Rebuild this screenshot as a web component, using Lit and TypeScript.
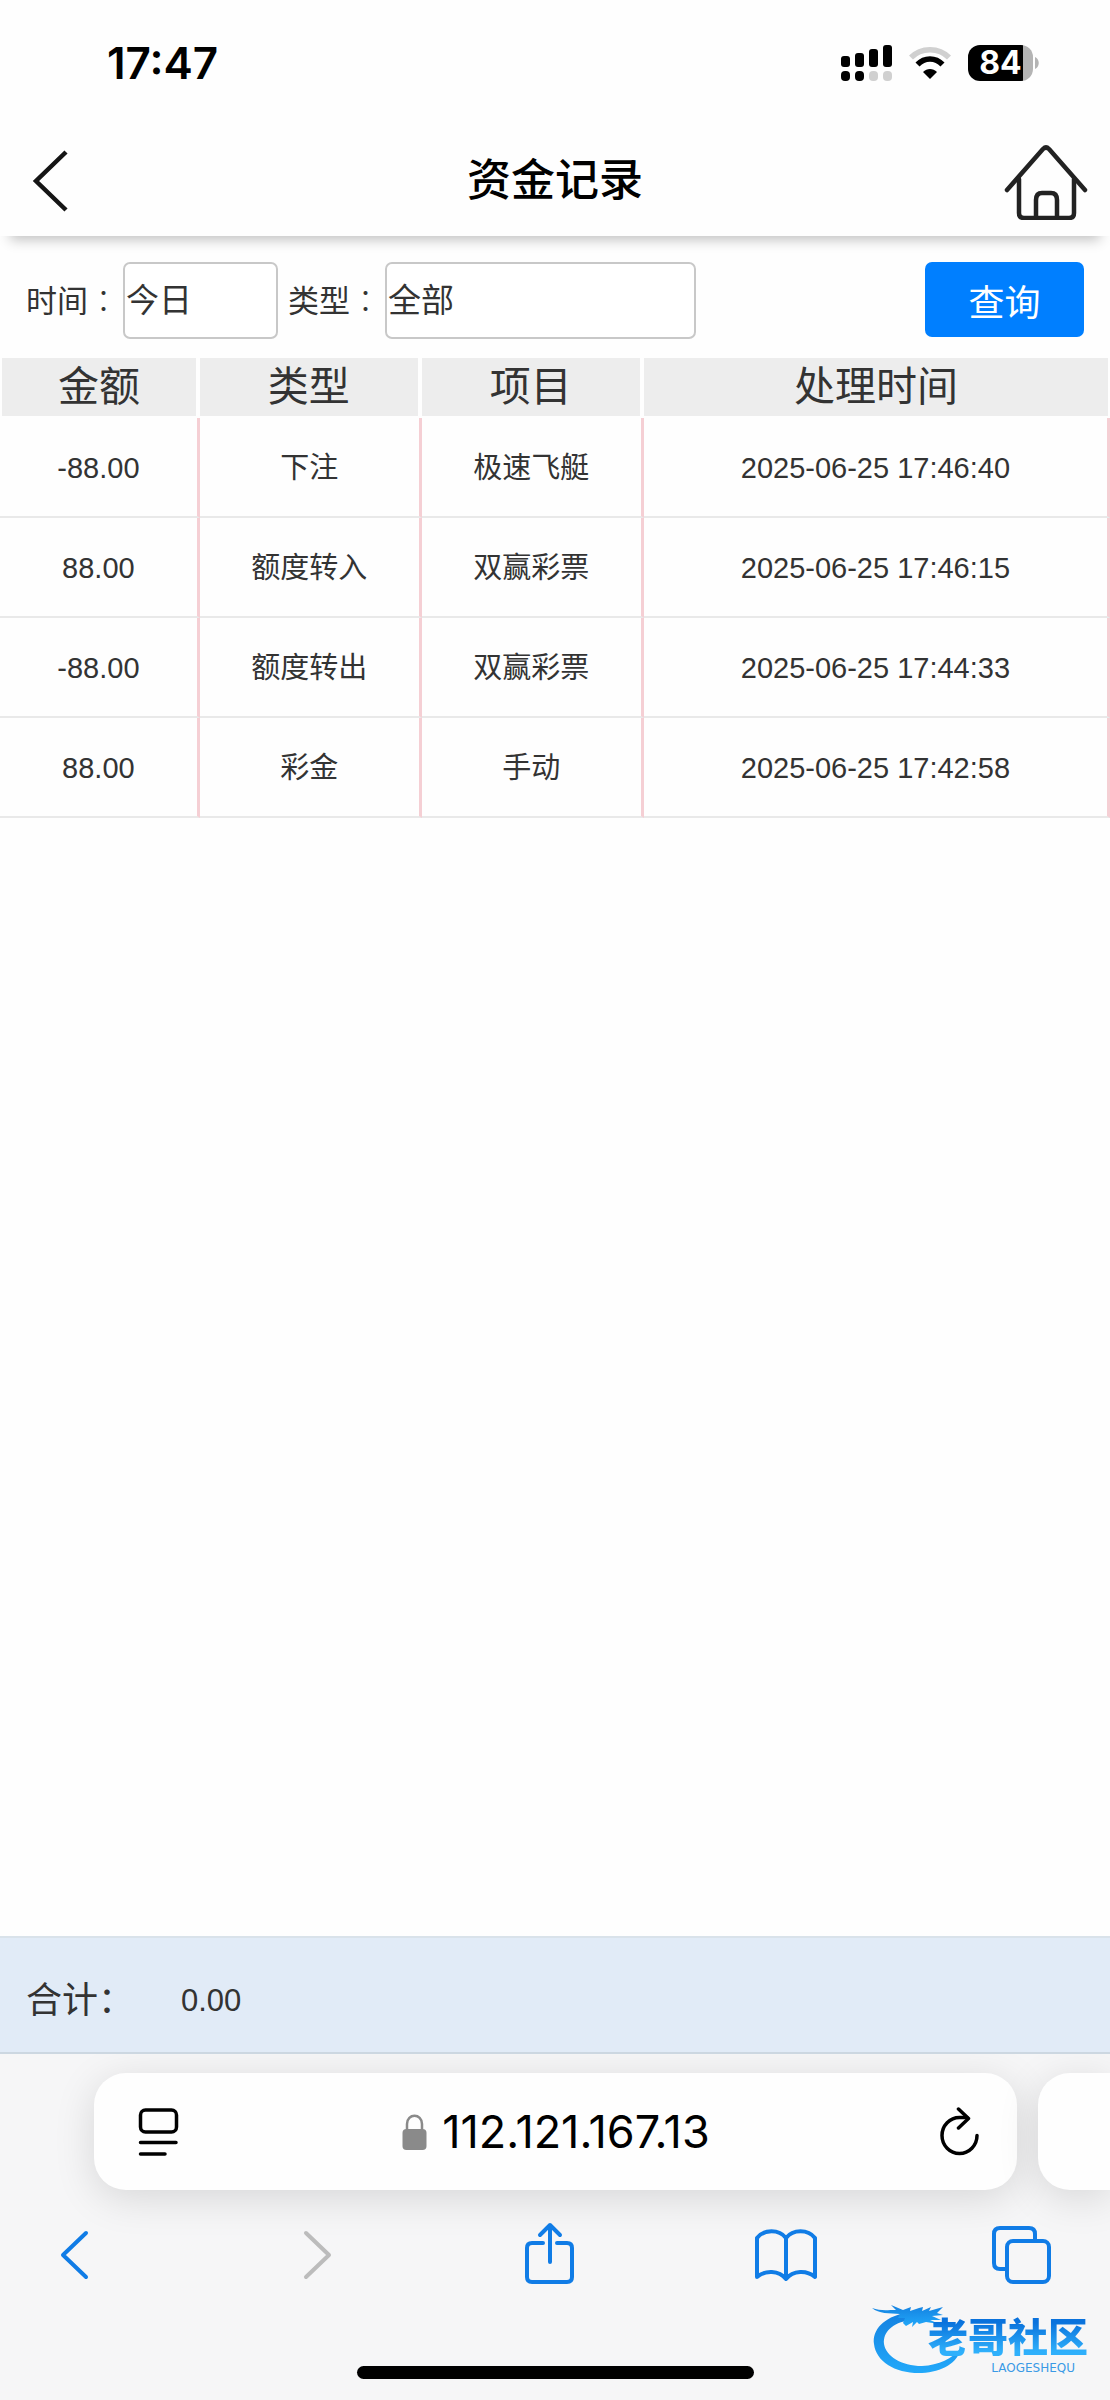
import { LitElement, html, css, svg } from "lit";
import { customElement, property } from "lit/decorators.js";

interface FundRecord {
  amount: string;
  kind: string;
  item: string;
  time: string;
}

const RECORDS: FundRecord[] = [
  { amount: "-88.00", kind: "下注", item: "极速飞艇", time: "2025-06-25 17:46:40" },
  { amount: "88.00", kind: "额度转入", item: "双赢彩票", time: "2025-06-25 17:46:15" },
  { amount: "-88.00", kind: "额度转出", item: "双赢彩票", time: "2025-06-25 17:44:33" },
  { amount: "88.00", kind: "彩金", item: "手动", time: "2025-06-25 17:42:58" },
];

@customElement("phone-status")
class PhoneStatus extends LitElement {
  static styles = css`
    :host {
      display: flex;
      align-items: center;
      justify-content: space-between;
      height: 126px;
      padding: 0 71px 0 107px;
      font-family: Inter, "Liberation Sans", sans-serif;
      color: #000;
    }
    .clock { font-size: 44px; font-weight: 600; line-height: 52px; }
    .icons { display: flex; align-items: center; gap: 17px; }
    .battery { display: flex; align-items: center; gap: 2px; }
    .cell {
      box-sizing: border-box;
      width: 65px;
      height: 36px;
      border-radius: 12px;
      background: linear-gradient(to right, #000 84%, #b4b4b4 84%);
      color: #fff;
      font-size: 32px;
      font-weight: 700;
      line-height: 36px;
      text-align: center;
    }
  `;
  render() {
    return html`
      <span class="clock">17:47</span>
      <span class="icons">
        <svg width="51" height="36" viewBox="0 0 51 36" aria-hidden="true">
          <rect x="0" y="11" width="9" height="11" rx="3" />
          <rect x="14" y="8" width="9" height="14" rx="3" />
          <rect x="28" y="4" width="9" height="18" rx="3" />
          <rect x="42" y="0" width="9" height="22" rx="3" />
          <rect x="0" y="26" width="9" height="10" rx="4" />
          <rect x="14" y="26" width="9" height="10" rx="4" />
          <rect x="28" y="26" width="9" height="10" rx="4" fill="#d0d0d0" />
          <rect x="42" y="26" width="9" height="10" rx="4" fill="#d0d0d0" />
        </svg>
        <svg width="42" height="34" viewBox="0 0 42 34" fill="none" aria-hidden="true">
          <path d="M2 11.500C12 1 30 1 40 11.500" stroke="#d0d0d0" stroke-width="5.500" />
          <path d="M8.500 18.500C15.500 11 26.500 11 33.500 18.500" stroke="#000" stroke-width="5.500" />
          <path d="M21 33L14 26C18 22 24 22 28 26Z" fill="#000" />
        </svg>
        <span class="battery">
          <span class="cell">84</span>
          <svg width="4" height="12" viewBox="0 0 4 12" aria-hidden="true"><path d="M0 0C5 2 5 10 0 12Z" fill="#b4b4b4" /></svg>
        </span>
      </span>
    `;
  }
}

@customElement("site-brand")
class SiteBrand extends LitElement {
  static styles = css`
    :host { display: block; font-family: "Noto Sans CJK SC", sans-serif; }
    .mark { display: block; }
    .words {
      position: absolute;
      right: 6px;
      top: 12px;
      display: flex;
      flex-direction: column;
      align-items: flex-end;
      gap: 5px;
    }
    .name {
      font-size: 40px;
      font-weight: 900;
      line-height: 42px;
      color: transparent;
      background: linear-gradient(#0a72dc 20%, #2fb0fb 90%);
      background-clip: text;
      -webkit-background-clip: text;
    }
    .latin {
      padding-right: 13px;
      font-family: "DejaVu Sans", sans-serif;
      font-size: 12px;
      line-height: 14px;
      color: #3a9ae6;
    }
  `;
  render() {
    return html`
      <svg class="mark" width="222" height="72" viewBox="0 0 222 72" aria-hidden="true">
        <defs>
          <linearGradient id="g" x1="0" y1="0" x2="0" y2="1">
            <stop offset="0" stop-color="#1481e0" />
            <stop offset="1" stop-color="#22a9fa" />
          </linearGradient>
        </defs>
        <path fill="url(#g)" d="M33 11C12 15 0 28 2 42C4 60 24 72 50 71C70 70 86 61 89 46C80 57 67 63 50 64C29 64 14 54 12 42C11 30 20 21 38 18Z" />
        <path fill="url(#g)" d="M0 6C8 9 14 8 24 8L19 3L31 8L39 5L38 9L47 6L51 5L50 9L59 5L57 9L71 5L65 11L71 13L60 14L69 18L58 18L67 22L54 20L47 22L45 20L40 25L41 20L34 24L31 21L33 16L26 16L28 12C17 11 7 12 0 6Z" />
      </svg>
      <span class="words">
        <span class="name">老哥社区</span>
        <span class="latin">LAOGESHEQU</span>
      </span>
    `;
  }
}

@customElement("browser-bar")
class BrowserBar extends LitElement {
  @property() address = "";

  static styles = css`
    :host {
      display: block;
      position: relative;
      overflow: hidden;
      height: 346px;
      background: #f6f6f7;
      font-family: Inter, "Liberation Sans", sans-serif;
    }
    button {
      display: flex;
      margin: 0;
      padding: 0;
      border: 0;
      background: none;
      color: inherit;
      font: inherit;
      cursor: pointer;
    }
    .tabs { display: flex; gap: 21px; padding: 19px 0 0 94px; }
    .card {
      box-sizing: border-box;
      height: 117px;
      border-radius: 32px;
      background: #fefefe;
      box-shadow: 0 8px 40px rgba(0, 0, 0, 0.13);
    }
    .current {
      flex: 1;
      display: flex;
      align-items: center;
      justify-content: space-between;
      padding: 0 37px 0 44px;
    }
    .next { width: 72px; border-radius: 32px 0 0 32px; }
    .address {
      gap: 15px;
      align-items: center;
      padding-right: 8px;
      color: #000;
      font-size: 45px;
      line-height: 52px;
    }
    .tools {
      display: flex;
      justify-content: space-between;
      padding: 30px 59px 0 45px;
      color: #107ce6;
    }
    .tools svg { overflow: visible; }
    .tools button:disabled { color: #bcbcbc; cursor: default; }
    .home-line {
      position: absolute;
      left: 50%;
      bottom: 21px;
      width: 397px;
      height: 13px;
      margin-left: -198px;
      border-radius: 7px;
      background: #000;
    }
    .brand { position: absolute; right: 16px; bottom: 26px; }
  `;

  private tool(label: string, shape: unknown, disabled = false) {
    return html`
      <button type="button" aria-label=${label} ?disabled=${disabled}>
        <svg width="60" height="66" viewBox="0 0 60 66" fill="none" stroke="currentColor" stroke-width="4" stroke-linecap="round" stroke-linejoin="round">
          ${shape}
        </svg>
      </button>
    `;
  }

  render() {
    return html`
      <div class="tabs">
        <div class="card current">
          <button type="button" aria-label="页面菜单">
            <svg width="42" height="50" viewBox="0 0 42 50" fill="none" stroke="#000" stroke-width="3.500" stroke-linecap="round">
              <rect x="2.500" y="3" width="36" height="22" rx="5" />
              <path d="M2.500 35.500H38M2.500 47H27" />
            </svg>
          </button>
          <button class="address" type="button">
            <svg width="25" height="36" viewBox="0 0 25 36" aria-hidden="true">
              <path d="M5 17V10C5 -1 20 -1 20 10V17" fill="none" stroke="#8a8a8a" stroke-width="2.500" />
              <rect x="0.500" y="15" width="24" height="21" rx="4" fill="#8a8a8a" />
            </svg>
            <span>${this.address}</span>
          </button>
          <button type="button" aria-label="重新载入">
            <svg width="40" height="50" viewBox="0 0 40 50" fill="none" stroke="#000" stroke-width="3.500" stroke-linecap="round" stroke-linejoin="round">
              <path d="M37 28.500A17.500 18 0 1 1 19.500 10.500H27" />
              <path d="M18.500 2L28.500 11.500L18.500 21" />
            </svg>
          </button>
        </div>
        <div class="card next"></div>
      </div>
      <div class="tools">
        ${this.tool("后退", svg`<path d="M41 13L18 35L41 57" />`)}
        ${this.tool("前进", svg`<path d="M24 13L47 35L24 57" />`, true)}
        ${this.tool("分享", svg`<path d="M25 23H14Q9 23 9 28V57Q9 62 14 62H49Q54 62 54 57V28Q54 23 49 23H39M32 42V5M22 15L32 5L42 15" />`)}
        ${this.tool("书签", svg`<path d="M31 18C24 9 9 9 2 18V57C10 50 24 50 31 59C38 50 52 50 60 57V18C53 9 38 9 31 18V58" />`)}
        ${this.tool("标签页", svg`<path d="M15 49H9Q3 49 3 43V14Q3 8 9 8H38Q44 8 44 14V19" /><rect x="16" y="21" width="42" height="41" rx="6" />`)}
      </div>
      <div class="home-line"></div>
      <site-brand class="brand"></site-brand>
    `;
  }
}

@customElement("app-root")
class AppRoot extends LitElement {
  static styles = css`
    :host {
      display: flex;
      flex-direction: column;
      min-height: 100vh;
      background: #fefefe;
      color: #333;
      font-family: "Liberation Sans", "Noto Sans CJK SC", sans-serif;
    }
    .titlebar {
      display: flex;
      align-items: center;
      justify-content: space-between;
      height: 110px;
      padding: 0 22px 0 30px;
      box-shadow: 0 14px 12px -10px rgba(0, 0, 0, 0.24);
    }
    .titlebar a { display: flex; width: 84px; }
    .titlebar .home { justify-content: flex-end; }
    .titlebar h1 {
      margin: 0;
      padding-right: 8px;
      color: #000;
      font-size: 44px;
      font-weight: 500;
      line-height: 52px;
    }
    .filters {
      display: flex;
      align-items: flex-start;
      gap: 10px;
      padding: 26px 26px 19px;
    }
    .field { display: flex; align-items: center; gap: 4px; }
    .field label { font-size: 31px; line-height: 40px; white-space: nowrap; }
    .colon { font-family: "Noto Sans CJK TC", sans-serif; font-weight: 300; }
    .field select {
      box-sizing: border-box;
      width: 155px;
      height: 77px;
      padding: 0 0 0 1px;
      border: 2px solid #c8c8c8;
      border-radius: 7px;
      appearance: none;
      -webkit-appearance: none;
      background: #fff;
      color: #333;
      font-family: inherit;
      font-size: 33px;
    }
    .field .wide { width: 311px; }
    .search {
      width: 159px;
      height: 75px;
      margin-left: auto;
      padding: 0;
      border: 0;
      border-radius: 7px;
      background: #007fff;
      color: #fff;
      font-family: inherit;
      font-size: 36px;
      cursor: pointer;
    }
    .records {
      width: 100%;
      border-spacing: 0;
      table-layout: fixed;
      text-align: center;
    }
    .records th, .records td { box-sizing: border-box; padding: 0; }
    .records th {
      height: 60px;
      border-right: 4px solid #fefefe;
      border-bottom: 2px solid #fefefe;
      background: #ededed;
      font-size: 41px;
      font-weight: 400;
      line-height: 58px;
    }
    .records th:first-child { border-left: 2px solid #fefefe; }
    .records th:last-child { border-right-width: 2px; }
    .records td {
      height: 100px;
      padding-top: 2px;
      border-right: 3px solid #f5cfd4;
      border-bottom: 2px solid #e9e9e9;
      font-size: 29px;
      line-height: 40px;
    }
    .narrow { width: 18%; }
    .medium { width: 20%; }
    .content { flex: 1; }
    .total {
      display: flex;
      align-items: center;
      gap: 47px;
      box-sizing: border-box;
      height: 118px;
      padding: 12px 26px 0;
      border-top: 2px solid #d9e2ea;
      border-bottom: 2px solid #ccd7e1;
      background: #e1ebf7;
      font-size: 36px;
      line-height: 48px;
    }
    .sum { font-size: 31px; }
  `;

  render() {
    return html`
      <phone-status></phone-status>
      <header class="titlebar">
        <a href="#back" aria-label="返回">
          <svg width="40" height="64" viewBox="0 0 40 64" fill="none" stroke="#151515" stroke-width="4.500">
            <path d="M36 3L6 32L36 61" />
          </svg>
        </a>
        <h1>资金记录</h1>
        <a class="home" href="#home" aria-label="首页">
          <svg width="84" height="78" viewBox="0 0 84 78" fill="none" stroke="#222" stroke-width="4.500" stroke-linecap="round" stroke-linejoin="round">
            <path d="M3 48L39 7Q42 4 45 7L81 48" />
            <path d="M15 37V71Q15 76 20 76H65Q70 76 70 71V37" />
            <path d="M32 75V58Q32 51 38 51H47Q53 51 53 58V75" />
          </svg>
        </a>
      </header>
      <main class="content">
        <form class="filters" @submit=${(e: Event) => e.preventDefault()}>
          <div class="field">
            <label for="period">时间<span class="colon">：</span></label>
            <select id="period"><option>今日</option></select>
          </div>
          <div class="field">
            <label for="kind">类型<span class="colon">：</span></label>
            <select id="kind" class="wide"><option>全部</option></select>
          </div>
          <button class="search" type="submit">查询</button>
        </form>
        <table class="records">
          <thead>
            <tr>
              <th class="narrow" scope="col">金额</th>
              <th class="medium" scope="col">类型</th>
              <th class="medium" scope="col">项目</th>
              <th scope="col">处理时间</th>
            </tr>
          </thead>
          <tbody>
            ${RECORDS.map((r) => html`<tr><td>${r.amount}</td><td>${r.kind}</td><td>${r.item}</td><td>${r.time}</td></tr>`)}
          </tbody>
        </table>
      </main>
      <footer class="total"><span>合计：</span><span class="sum">0.00</span></footer>
      <browser-bar address="112.121.167.13"></browser-bar>
    `;
  }
}
